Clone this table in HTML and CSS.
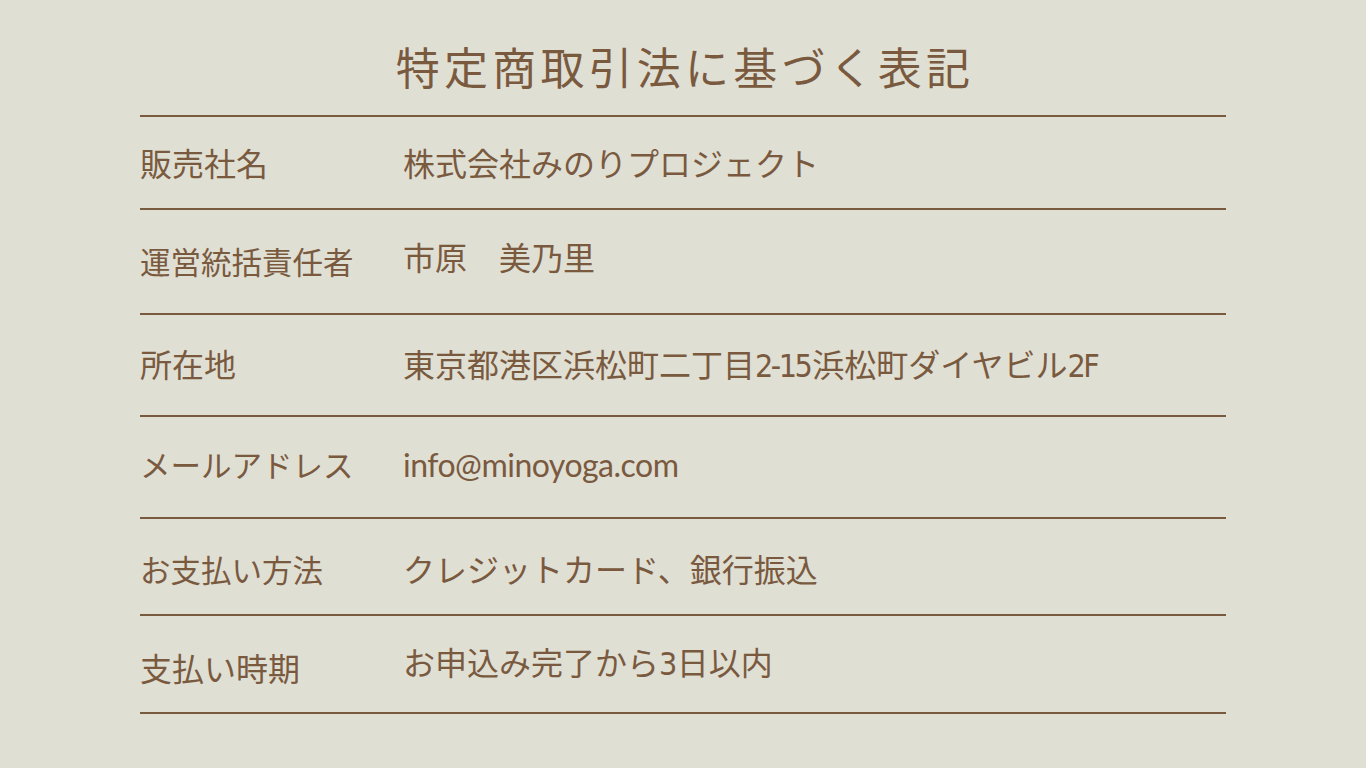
FILE: index.html
```html
<!DOCTYPE html>
<html lang="ja">
<head>
    <meta charset="UTF-8">
    <meta name="viewport" content="width=device-width, initial-scale=1.0">
    <title>特定商取引法に基づく表記</title>
    <link rel="stylesheet" href="styles.css">
</head>
<body>
    <!-- 特商法表記 -->
    <main class="legal">
        <h1 class="legal-title">特定商取引法に基づく表記</h1>

        <dl class="legal-list">
            <div class="legal-row row-1">
                <dt class="legal-label">販売社名</dt>
                <dd class="legal-value">株式会社みのりプロジェクト</dd>
            </div>
            <div class="legal-row row-2">
                <dt class="legal-label legal-label--long">運営統括責任者</dt>
                <dd class="legal-value">市原　美乃里</dd>
            </div>
            <div class="legal-row row-3">
                <dt class="legal-label">所在地</dt>
                <dd class="legal-value">東京都港区浜松町二丁目<span class="narrow">2-15</span>浜松町ダイヤビル<span class="narrow">2F</span></dd>
            </div>
            <div class="legal-row row-4">
                <dt class="legal-label legal-label--long">メールアドレス</dt>
                <dd class="legal-value legal-value--mail">info@minoyoga.com</dd>
            </div>
            <div class="legal-row row-5">
                <dt class="legal-label legal-label--long">お支払い方法</dt>
                <dd class="legal-value">クレジットカード、銀行振込</dd>
            </div>
            <div class="legal-row row-6">
                <dt class="legal-label">支払い時期</dt>
                <dd class="legal-value">お申込み完了から<span class="narrow">3</span>日以内</dd>
            </div>
        </dl>
    </main>
</body>
</html>
```

FILE: styles.css
```css
/* 基本 */
* { margin: 0; padding: 0; box-sizing: border-box; }
body {
    background: #e0dfd4;
    color: #7a5a3f;
    font-family: 'Lato', 'Noto Sans CJK JP', sans-serif;
}

.legal { padding: 33px 140px 0; }

.legal-title {
    text-align: center;
    font-family: 'Noto Sans CJK JP', sans-serif;
    font-size: 44px;
    font-weight: 400;
    letter-spacing: 4.2px;
    line-height: 66px;
    padding-left: 4px;
    margin-bottom: 16px;
}

/* 表 */
.legal-list { border-top: 2px solid #7a5a3f; }
.legal-row {
    display: grid;
    grid-template-columns: 263px 1fr;
    align-items: center;
    border-bottom: 2px solid #7a5a3f;
    font-size: 32px;
    line-height: 40px;
}
.legal-label, .legal-value { font-weight: 400; }
.legal-label--long { font-size: 30.5px; }
.legal-value--mail { letter-spacing: -0.5px; }
.narrow {
    font-family: 'Liberation Sans Narrow', 'DejaVu Sans Condensed', 'Lato', sans-serif;
    font-stretch: condensed;
    letter-spacing: -2.5px;
    margin-right: 2px;
}

/* 行ごとの高さ・位置 */
.row-1 { height: 93px; padding-top: 2px; }
.row-2 { height: 105px; }
.row-2 .legal-value { margin-top: -8px; }
.row-3 { height: 102px; padding-top: 0; }
.row-4 { height: 102px; padding-bottom: 4px; }
.row-5 { height: 97px; padding-top: 6px; }
.row-6 { height: 98px; padding-top: 10px; }
.row-6 .legal-value { margin-top: -12px; }
```
